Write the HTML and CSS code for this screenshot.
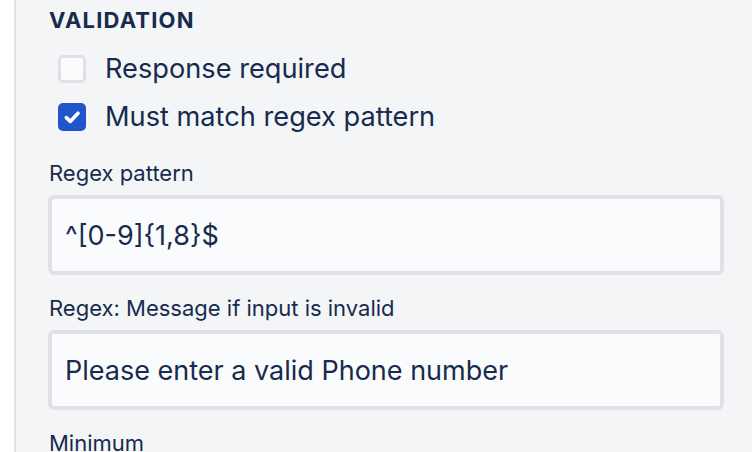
FILE: index.html
```html
<!DOCTYPE html>
<html lang="en">
<head>
<meta charset="utf-8">
<title>Validation</title>
<link rel="stylesheet" href="styles.css">
</head>
<body>
<div class="layout">
  <div class="gutter"></div>
  <section class="panel">
    <h2 class="heading">VALIDATION</h2>
    <label class="check-row first-row">
      <span class="box"></span>
      <span class="check-text">Response required</span>
    </label>
    <label class="check-row">
      <span class="box box-checked">
        <svg width="28" height="28" viewBox="0 0 28 28"><path d="M8.3 14.6 L12.3 18.4 L20 10.2" fill="none" stroke="#fff" stroke-width="3.6" stroke-linecap="round" stroke-linejoin="round"/></svg>
      </span>
      <span class="check-text">Must match regex pattern</span>
    </label>
    <div class="field first-field">
      <div class="field-label">Regex pattern</div>
      <div class="input">^[0-9]{1,8}$</div>
    </div>
    <div class="field">
      <div class="field-label">Regex: Message if input is invalid</div>
      <div class="input">Please enter a valid Phone number</div>
    </div>
    <div class="field">
      <div class="field-label">Minimum</div>
    </div>
  </section>
</div>
</body>
</html>
```
FILE: styles.css
```css
html, body {
  margin: 0;
  padding: 0;
  height: 100%;
  overflow: hidden;
}
body {
  font-family: Inter, "Noto Sans", sans-serif;
  color: #172b4d;
  background: #ffffff;
}
.layout {
  display: flex;
  height: 452px;
  overflow: hidden;
}
.gutter {
  width: 14px;
  flex: none;
  background: #ffffff;
  border-right: 2px solid #dfe1e6;
}
.panel {
  flex: 1;
  background: #f4f5f7;
  padding: 7px 28px 0 32px;
  display: block;
}
.heading {
  margin: 0 0 0 1px;
  font-size: 22px;
  font-weight: 700;
  line-height: 26px;
  letter-spacing: 1.2px;
  color: #172b4d;
}
.check-row {
  display: flex;
  align-items: center;
  height: 48px;
  padding-left: 10px;
}
.first-row {
  margin-top: 12px;
}
.box {
  width: 28px;
  height: 28px;
  box-sizing: border-box;
  border: 3px solid #dfe1e6;
  border-radius: 5px;
  background: #fafbfc;
  flex: none;
  display: flex;
}
.box-checked {
  border: none;
  background: #1f56cc;
}
.check-text {
  margin-left: 19px;
  font-size: 27.2px;
  line-height: 32px;
}
.field {
  display: flex;
  flex-direction: column;
}
.field-label {
  margin: 20px 0 9px 1px;
  font-size: 22px;
  line-height: 26px;
}
.first-field .field-label {
  margin-top: 19px;
}
.input {
  box-sizing: border-box;
  height: 80px;
  border: 4px solid #dfe1e6;
  border-radius: 6px;
  background: #fafbfc;
  padding: 0 13px;
  display: flex;
  align-items: center;
  font-size: 27px;
}
```
